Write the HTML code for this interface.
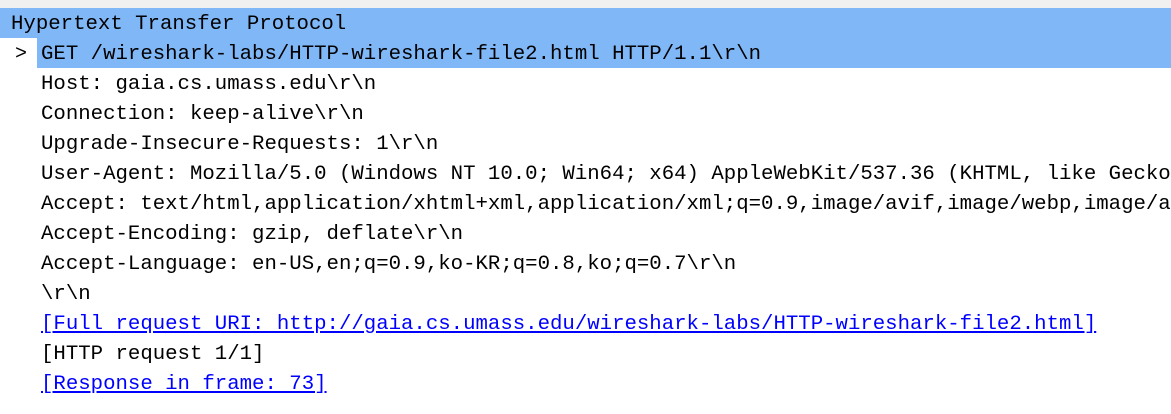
<!DOCTYPE html>
<html><head><meta charset="utf-8"><style>
html,body{margin:0;padding:0;width:1171px;height:414px;overflow:hidden;background:#fff}
body{font-family:"Liberation Mono",monospace;font-size:20.7px;color:#000;position:relative}
.top{position:absolute;left:0;top:0;width:1171px;height:8px;background:#f0f0f0}
.row{position:absolute;left:0;width:1171px;height:30px;line-height:30px;white-space:pre;overflow:hidden}
.row span{top:2px}
.row span.t{position:absolute;left:41px}
.sel{background:#80b7f7}
.lk{color:#0000ff;text-decoration:underline}
.chev{position:absolute;left:15px;font-size:20px}
</style></head><body>
<div class="top"></div>
<div class="row sel" style="top:8px"><span style="position:absolute;left:11px">Hypertext Transfer Protocol</span></div>
<div class="row" style="top:38px"><div class="sel" style="position:absolute;left:37px;right:0;top:0;height:30px"></div><span class="chev">&gt;</span><span class="t">GET /wireshark-labs/HTTP-wireshark-file2.html HTTP/1.1\r\n</span></div>
<div class="row" style="top:68px"><span class="t">Host: gaia.cs.umass.edu\r\n</span></div>
<div class="row" style="top:98px"><span class="t">Connection: keep-alive\r\n</span></div>
<div class="row" style="top:128px"><span class="t">Upgrade-Insecure-Requests: 1\r\n</span></div>
<div class="row" style="top:158px"><span class="t">User-Agent: Mozilla/5.0 (Windows NT 10.0; Win64; x64) AppleWebKit/537.36 (KHTML, like Gecko) Chrome</span></div>
<div class="row" style="top:188px"><span class="t">Accept: text/html,application/xhtml+xml,application/xml;q=0.9,image/avif,image/webp,image/apng</span></div>
<div class="row" style="top:218px"><span class="t">Accept-Encoding: gzip, deflate\r\n</span></div>
<div class="row" style="top:248px"><span class="t">Accept-Language: en-US,en;q=0.9,ko-KR;q=0.8,ko;q=0.7\r\n</span></div>
<div class="row" style="top:278px"><span class="t">\r\n</span></div>
<div class="row" style="top:308px"><span class="t lk">[Full request URI: http://gaia.cs.umass.edu/wireshark-labs/HTTP-wireshark-file2.html]</span></div>
<div class="row" style="top:338px"><span class="t">[HTTP request 1/1]</span></div>
<div class="row" style="top:368px"><span class="t lk">[Response in frame: 73]</span></div>
</body></html>
